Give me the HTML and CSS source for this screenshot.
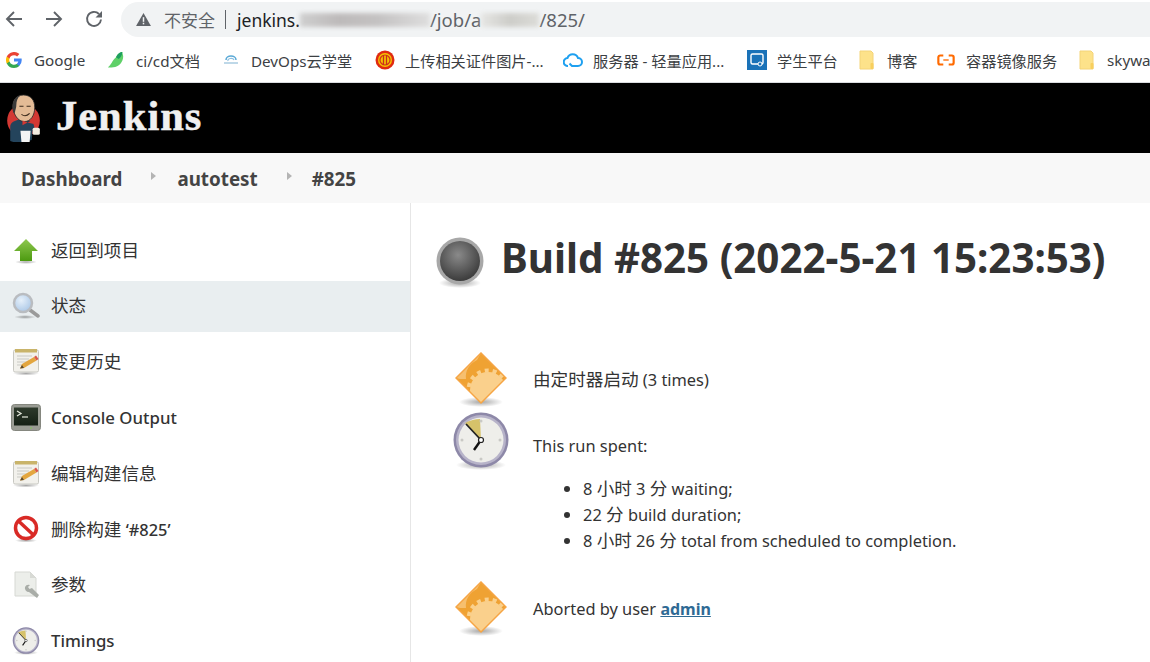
FILE: index.html
```html
<!DOCTYPE html>
<html lang="zh">
<head>
<meta charset="utf-8">
<title>Jenkins</title>
<link rel="stylesheet" href="styles.css">
</head>
<body>
<svg class="defs" width="0" height="0" aria-hidden="true">
  <defs>
    <radialGradient id="ballG" cx="45%" cy="35%" r="65%"><stop offset="0" stop-color="#8a8a8a"/><stop offset="1" stop-color="#3c3c3c"/></radialGradient>
    <radialGradient id="shadowG"><stop offset="0" stop-color="#000" stop-opacity=".35"/><stop offset="1" stop-color="#000" stop-opacity="0"/></radialGradient>
    <radialGradient id="glassG" cx="40%" cy="35%" r="70%"><stop offset="0" stop-color="#e6f0fa"/><stop offset="1" stop-color="#a9c6e6"/></radialGradient>
    <linearGradient id="arrowG" x1="0" y1="0" x2="0" y2="1"><stop offset="0" stop-color="#8fc850"/><stop offset="1" stop-color="#4c9a10"/></linearGradient>
    <linearGradient id="termG" x1="0" y1="0" x2="0" y2="1"><stop offset="0" stop-color="#2e3a2c"/><stop offset="1" stop-color="#152015"/></linearGradient>
    <clipPath id="diamondClip"><path d="M26 1 51 26 26 51 1 26z"/></clipPath>
    <symbol id="i-notepad" viewBox="0 0 28 28">
      <ellipse cx="14" cy="25.500" rx="13" ry="2" fill="url(#shadowG)"/>
      <rect x="1.500" y="2" width="25" height="22" rx="1.500" fill="#f2f1ec" stroke="#c8c8c2"/>
      <rect x="3" y="1" width="22" height="3.500" fill="#c9b46a"/>
      <path d="M5 8h15M5 11h12M5 14h10M5 17h6" stroke="#c9c9c4" stroke-width="1"/>
      <path d="M8 20.500 10 16 22 9l2.500 3.500L12 20z" fill="#e3a63f"/>
      <path d="M8 20.500 10 17l2 3z" fill="#5b4a30"/>
      <path d="M22 9l2.500 3.500 2-1.500-2.500-3.500z" fill="#d9584b"/>
    </symbol>
    <symbol id="i-diamond" viewBox="0 0 52 56">
      <ellipse cx="26" cy="50" rx="22" ry="5" fill="url(#shadowG)"/>
      <g clip-path="url(#diamondClip)">
        <rect width="52" height="52" fill="#efa233"/>
        <path d="M1 26 26 1 22 8C14 12 10 19 11 27L5 27z" fill="#f6bf6f"/>
        <circle cx="33" cy="38" r="18" fill="#fad08c"/>
        <circle cx="33" cy="38" r="19.500" fill="none" stroke="#fad08c" stroke-width="4" stroke-dasharray="4 4"/>
      </g>
      <path d="M26 1 51 26 26 51 1 26z" fill="none" stroke="#f6a545" stroke-width="1.500"/>
    </symbol>
    <symbol id="i-clock" viewBox="0 0 58 58">
      <ellipse cx="29" cy="53" rx="25" ry="5" fill="url(#shadowG)"/>
      <circle cx="29" cy="28" r="27.500" fill="#8d88a8"/>
      <circle cx="29" cy="28" r="25" fill="#b7b3c9"/>
      <circle cx="29" cy="28" r="22.500" fill="#eeeeea"/>
      <path d="M29 28 13 11 Q21 7 28 7z" fill="#d6c26a"/>
      <circle cx="29" cy="9" r="1.500" fill="#c9c9c5"/><circle cx="48" cy="28" r="1.500" fill="#c9c9c5"/><circle cx="29" cy="47" r="1.500" fill="#c9c9c5"/><circle cx="10" cy="28" r="1.500" fill="#c9c9c5"/>
      <path d="M29 28 14 12" stroke="#222" stroke-width="1.800"/>
      <path d="M29 28 22 38" stroke="#111" stroke-width="2.400"/>
      <circle cx="29" cy="28" r="2.500" fill="#fff" stroke="#222" stroke-width="1.200"/>
    </symbol>
    <symbol id="i-folder" viewBox="0 0 16 20">
      <path d="M1 1h11l2 2v16H1z" fill="#fde28a" stroke="#f4d478" stroke-width="1"/>
      <rect x="11.500" y="13" width="3" height="6" rx="1" fill="#f8cf5e"/>
    </symbol>
  </defs>
</svg>

<div class="browser">
  <div class="toolbar">
    <svg class="nav" viewBox="0 0 20 20"><path d="M18 10H3M10 3 3 10l7 7" fill="none" stroke="#5f6368" stroke-width="1.900"/></svg>
    <svg class="nav" viewBox="0 0 20 20"><path d="M2 10h15M10 3l7 7-7 7" fill="none" stroke="#5f6368" stroke-width="1.900"/></svg>
    <svg class="nav" viewBox="0 0 20 20"><path d="M17 10.500a7 7 0 1 1-2-5.500" fill="none" stroke="#5f6368" stroke-width="1.900"/><path d="M18 2v6.500h-6.500z" fill="#5f6368"/></svg>
    <div class="omnibox">
      <svg class="warn" viewBox="0 0 16 14"><path d="M8 0 16 14H0z" fill="#5f6368"/><rect x="7.200" y="4.500" width="1.600" height="5" fill="#f1f3f4"/><rect x="7.200" y="10.500" width="1.600" height="1.700" fill="#f1f3f4"/></svg>
      <span class="insecure">不安全</span>
      <span class="sep"></span>
      <span class="host">jenkins.</span><span class="blur blur-a"></span><span class="path">/job/a</span><span class="blur blur-b"></span><span class="path">/825/</span>
    </div>
  </div>
  <div class="bookmarks">
    <div class="bm bm-1">
      <svg class="bm-ic" viewBox="0 0 16 16"><path d="M15.700 8.200c0-.6 0-1.100-.1-1.600H8v3h4.300a3.700 3.700 0 0 1-1.600 2.400v2h2.600a7.800 7.800 0 0 0 2.400-5.800z" fill="#4285f4"/><path d="M8 16c2.200 0 4-.7 5.300-2l-2.600-2a4.800 4.800 0 0 1-7.200-2.500H.8v2A8 8 0 0 0 8 16z" fill="#34a853"/><path d="M3.500 9.500a4.800 4.800 0 0 1 0-3v-2H.8a8 8 0 0 0 0 7z" fill="#fbbc05"/><path d="M8 3.200c1.200 0 2.300.4 3.100 1.200l2.300-2.300A8 8 0 0 0 .8 4.500l2.700 2A4.800 4.800 0 0 1 8 3.200z" fill="#ea4335"/></svg>
      <span>Google</span>
    </div>
    <div class="bm bm-2">
      <svg class="bm-ic bm-ic-wide" viewBox="0 0 20 20"><path d="M1 18C4 17 6 10 10 7c1-3 4-6 7-6 0 2 1 3 1 5 0 6-5 12-11 12-2 0-4 1-6 0z" fill="#5fd068"/><path d="M10 7c1-3 4-6 7-6 0 4-2 6-4 8z" fill="#1e9e60"/></svg>
      <span>ci/cd文档</span>
    </div>
    <div class="bm bm-3">
      <svg class="bm-ic" viewBox="0 0 16 16"><path d="M3 8a5 4 0 0 1 10 0" fill="none" stroke="#5aa9d6" stroke-width="1.500"/><path d="M5 9a3 2 0 0 1 6-1" fill="none" stroke="#8bbfe0" stroke-width="1.200"/><path d="M1 11h14" stroke="#a8cbe0" stroke-width="1.500"/></svg>
      <span>DevOps云学堂</span>
    </div>
    <div class="bm bm-4">
      <svg class="bm-ic bm-ic-round" viewBox="0 0 20 20"><circle cx="10" cy="10" r="9.500" fill="#e02a10"/><circle cx="10" cy="10" r="7" fill="#f4c400"/><circle cx="10" cy="10" r="5" fill="none" stroke="#d4301a" stroke-width="1.200"/><path d="M8.500 5v10M11.500 5v10" stroke="#c8301a" stroke-width="1.300"/></svg>
      <span>上传相关证件图片-...</span>
    </div>
    <div class="bm bm-5">
      <svg class="bm-ic bm-ic-cloud" viewBox="0 0 20 16"><path d="M5 14a4 4 0 0 1-.5-8A5.500 5.500 0 0 1 15 6a4 4 0 0 1 0 8H9L6.500 11.500" fill="none" stroke="#1ea0f0" stroke-width="2"/></svg>
      <span>服务器 - 轻量应用...</span>
    </div>
    <div class="bm bm-6">
      <svg class="bm-ic bm-ic-round" viewBox="0 0 20 20"><rect width="20" height="20" fill="#1a72b8"/><rect x="4" y="4" width="12" height="10" rx="1.500" fill="none" stroke="#fff" stroke-width="1.400"/><circle cx="13" cy="14" r="2" fill="#1a72b8" stroke="#fff" stroke-width="1"/></svg>
      <span>学生平台</span>
    </div>
    <div class="bm bm-7">
      <svg class="bm-ic bm-ic-folder"><use href="#i-folder"/></svg>
      <span>博客</span>
    </div>
    <div class="bm bm-8">
      <svg class="bm-ic bm-ic-wide" viewBox="0 0 20 14"><path d="M7 2H3.500A2 2 0 0 0 1.500 4v6a2 2 0 0 0 2 2H7M13 2h3.500a2 2 0 0 1 2 2v6a2 2 0 0 1-2 2H13" fill="none" stroke="#ff6a00" stroke-width="2.400"/><path d="M7 7h6" stroke="#ff6a00" stroke-width="1.500"/></svg>
      <span>容器镜像服务</span>
    </div>
    <div class="bm bm-9">
      <svg class="bm-ic bm-ic-folder"><use href="#i-folder"/></svg>
      <span>skywa</span>
    </div>
  </div>
</div>

<header class="jk-header">
  <svg class="logo" viewBox="0 0 36 48">
    <circle cx="18" cy="26" r="16" fill="#d33833"/>
    <path d="M5 46V32c0-4 5-7 12-7 6 0 10 2 11 5l1 4-2 2-1 9-8 2H8z" fill="#24445c"/>
    <path d="M8 16C6 8 10 1 18 1c7 0 11 5 11 12 0 8-4 14-10 14-5 0-9-4-11-11z" fill="#e3bb96" stroke="#2a2a2a" stroke-width=".8"/>
    <path d="M8 18C6 9 9 2 15 1.500c-3 2-4 6-4 9 0 3-1 5-1.500 8z" fill="#3a3a3a"/>
    <path d="M14 12h4M21 12h4M16 20q4 3 8-1" stroke="#3a2a1c" stroke-width="1.100" fill="none"/>
    <path d="M17 26l5 2 6-3v4.500l-6-1.500-5 2.500z" fill="#d33833"/>
    <path d="M15 36h10l-1 11h-8z" fill="#f4f4f4"/>
    <rect x="27" y="33" width="7" height="7" rx="1.500" fill="#f4ede2"/>
  </svg>
  <span class="wordmark">Jenkins</span>
</header>

<nav class="crumbs">
  <a class="crumb">Dashboard</a><span class="chev"></span>
  <a class="crumb">autotest</a><span class="chev"></span>
  <a class="crumb">#825</a>
</nav>

<div class="page">
  <aside class="side">
    <div class="task">
      <svg class="task-ic" viewBox="0 0 28 28"><ellipse cx="14" cy="25" rx="11" ry="2" fill="url(#shadowG)"/><path d="M14 2 26 14h-6v10H8V14H2z" fill="url(#arrowG)"/></svg>
      <span class="cjk">返回到项目</span>
    </div>
    <div class="task task-active">
      <svg class="task-ic" viewBox="0 0 28 28"><ellipse cx="13" cy="25" rx="11" ry="2" fill="url(#shadowG)"/><path d="M18 18 26 24" stroke="#9a9a9a" stroke-width="3.500" stroke-linecap="round"/><circle cx="11" cy="11" r="9" fill="url(#glassG)" stroke="#b9bcc0" stroke-width="2.500"/></svg>
      <span class="cjk">状态</span>
    </div>
    <div class="task">
      <svg class="task-ic"><use href="#i-notepad"/></svg>
      <span class="cjk">变更历史</span>
    </div>
    <div class="task task-strong">
      <svg class="task-ic task-ic-lg" viewBox="0 0 30 28"><rect x="0.500" y="0.500" width="29" height="26" rx="3" fill="#9a9c94" stroke="#85877f"/><rect x="3" y="3.500" width="24" height="18" fill="url(#termG)"/><path d="M6 7l4 2.500L6 12" fill="none" stroke="#e4e8dc" stroke-width="1.300"/><path d="M11 13h6" stroke="#e4e8dc" stroke-width="1.200"/><circle cx="20" cy="24" r=".8" fill="#7ed04b"/></svg>
      <span>Console Output</span>
    </div>
    <div class="task">
      <svg class="task-ic"><use href="#i-notepad"/></svg>
      <span class="cjk">编辑构建信息</span>
    </div>
    <div class="task">
      <svg class="task-ic" viewBox="0 0 28 28"><ellipse cx="14" cy="25.500" rx="11" ry="2" fill="url(#shadowG)"/><circle cx="14" cy="13" r="10.500" fill="#fff" stroke="#d92a26" stroke-width="3.500"/><path d="M6.500 6 21.500 20" stroke="#d92a26" stroke-width="3.500"/></svg>
      <span><span class="cjk">删除构建</span> <span class="task-ref">‘#825’</span></span>
    </div>
    <div class="task">
      <svg class="task-ic" viewBox="0 0 28 28"><path d="M3 1h15l6 6v18H3z" fill="#eceeea" stroke="#d6d8d3"/><path d="M18 1v6h6z" fill="#d8dad5"/><path d="M13 16a4 4 0 0 1 5-2l-2 2 1.500 2 2.500-1 7 7-2 3-8-6a4 4 0 0 1-4-5z" fill="#a9ada8"/></svg>
      <span class="cjk">参数</span>
    </div>
    <div class="task task-strong">
      <svg class="task-ic"><use href="#i-clock"/></svg>
      <span>Timings</span>
    </div>
  </aside>
  <main class="main">
    <h1 class="title">
      <svg class="ball" viewBox="0 0 48 52"><ellipse cx="24" cy="46" rx="21" ry="5" fill="url(#shadowG)"/><circle cx="24" cy="24" r="23.500" fill="#a8a8a8"/><circle cx="24" cy="24" r="20" fill="url(#ballG)"/></svg>
      <span>Build #825 (2022-5-21 15:23:53)</span>
    </h1>
    <section class="cause">
      <svg class="big-ic"><use href="#i-diamond"/></svg>
      <div class="cause-text"><span class="cjk">由定时器启动</span> (3 times)</div>
    </section>
    <section class="spent">
      <svg class="big-ic"><use href="#i-clock"/></svg>
      <div class="spent-body">
        <p class="spent-lead">This run spent:</p>
        <ul class="spent-list">
          <li>8 <span class="cjk">小时</span> 3 <span class="cjk">分</span> waiting;</li>
          <li>22 <span class="cjk">分</span> build duration;</li>
          <li>8 <span class="cjk">小时</span> 26 <span class="cjk">分</span> total from scheduled to completion.</li>
        </ul>
      </div>
    </section>
    <section class="cause cause-abort">
      <svg class="big-ic"><use href="#i-diamond"/></svg>
      <div class="cause-text">Aborted by user <a class="user">admin</a></div>
    </section>
  </main>
</div>
</body>
</html>
```

FILE: styles.css
```css
* { box-sizing: border-box; }
html, body { margin: 0; height: 662px; overflow: hidden; background: #fff; }
body { font-family: "Noto Sans", "Noto Sans CJK SC", sans-serif; color: #333; font-size: 16px; }
.defs { position: absolute; }
.cjk { font-size: 17.600px; line-height: 1; }

.browser { height: 83px; background: #fff; border-bottom: 1px solid #dadce0; }
.toolbar { height: 41px; display: flex; align-items: flex-start; padding: 2px 0 0 4px; }
.nav { width: 20px; height: 20px; margin: 7px 20px 0 0; flex: none; }
.nav:nth-child(3) { margin-right: 17px; }
.omnibox { flex: 1; height: 35px; background: #f1f3f4; border-radius: 18px 0 0 18px; display: flex; align-items: center; padding-left: 15px; font-size: 17.500px; color: #202124; }
.warn { width: 15px; height: 13px; margin-right: 13px; }
.insecure { color: #5f6368; font-size: 17px; }
.sep { width: 1px; height: 19px; background: #5f6368; margin: 0 11px 0 10px; }
.host { color: #202124; }
.path { color: #5f6368; font-size: 18.500px; }
.blur { display: block; height: 14px; filter: blur(2px); }
.blur-a { width: 130px; background: linear-gradient(90deg, #cfcfcf, #bdbaba 30%, #c4c2c2 60%, #dedede); }
.blur-b { width: 58px; background: linear-gradient(90deg, #e6e6e4, #cdcdc9 50%, #dcdcd8); }

.bookmarks { height: 41px; display: flex; align-items: center; font-size: 15.200px; color: #3c4043; padding-bottom: 3px; }
.bm { display: flex; align-items: center; flex: none; white-space: nowrap; }
.bm-ic { width: 16px; height: 16px; flex: none; margin-right: 12px; }
.bm-ic-wide { width: 18px; height: 18px; margin-right: 11px; }
.bm-ic-cloud { width: 20px; height: 18px; margin-right: 10px; }
.bm-ic-round { width: 20px; height: 20px; margin-right: 10px; }
.bm-ic-folder { width: 16px; height: 20px; margin-right: 12px; }
.bm-1 { margin-left: 6px; width: 101px; }
.bm-2 { width: 116px; }
.bm-3 { width: 152px; }
.bm-4 { width: 188px; }
.bm-5 { width: 184px; }
.bm-6 { width: 112px; }
.bm-7 { width: 78px; }
.bm-8 { width: 142px; }

.jk-header { height: 70px; background: #000; display: flex; align-items: center; padding-left: 5px; }
.logo { width: 37px; height: 49px; flex: none; }
.wordmark { font-family: "Liberation Serif", serif; font-weight: 700; font-size: 42.500px; letter-spacing: 1px; color: #f0f0f0; margin: -3px 0 0 14px; line-height: 1; -webkit-text-stroke: .5px #f0f0f0; }

.crumbs { height: 50px; background: #f8f8f8; display: flex; align-items: center; padding: 2px 0 0 21px; font-size: 18.800px; font-weight: 700; color: #444; }
.crumb { line-height: 1; }
.chev { width: 0; height: 0; border-left: 5px solid #b4b4b4; border-top: 4px solid transparent; border-bottom: 4px solid transparent; margin: -6px 21px 0 29px; }
.chev:nth-of-type(2) { margin-right: 20px; }

.page { display: flex; height: 459px; }
.side { width: 411px; flex: none; border-right: 1px solid #e6e6e6; padding-top: 20px; font-size: 16.400px; }
.task { height: 55.700px; display: flex; align-items: center; padding: 0 0 0 12px; color: #333; }
.task-active { background: #e9eef0; height: 51px; margin: 2px 0 2.700px; }
.task-strong { font-weight: 500; font-size: 16.800px; }
.task-ref { font-weight: 500; }
.task-ic { width: 28px; height: 28px; flex: none; margin-right: 11px; }
.task-ic-lg { width: 30px; margin-left: -1px; margin-right: 10px; }

.main { flex: 1; min-width: 0; padding: 27px 0 0 25px; font-size: 16.400px; }
.title { margin: 0; display: flex; align-items: flex-start; font-size: 40.300px; font-weight: 700; line-height: 56px; height: 120px; white-space: nowrap; color: #333; }
.ball { width: 48px; height: 52px; flex: none; margin: 7px 17px 0 0; }

.cause { display: flex; align-items: center; margin-left: 19px; height: 60px; }
.big-ic { width: 52px; height: 56px; flex: none; margin-right: 26px; }
.cause-text { margin-top: -2px; }
.spent { display: flex; align-items: flex-start; margin-left: 16px; }
.spent .big-ic { width: 58px; height: 58px; margin-right: 23px; margin-top: 2px; }
.spent-body { padding-top: 24px; }
.spent-lead { margin: 0 0 18px; line-height: 24px; }
.spent-list { margin: 0; padding-left: 50px; }
.spent-list li { height: 26px; line-height: 26px; }
.cause-abort { margin-top: 25px; }
.user { font-weight: 700; font-size: 16px; text-decoration: underline; color: #2f6a94; }
```
